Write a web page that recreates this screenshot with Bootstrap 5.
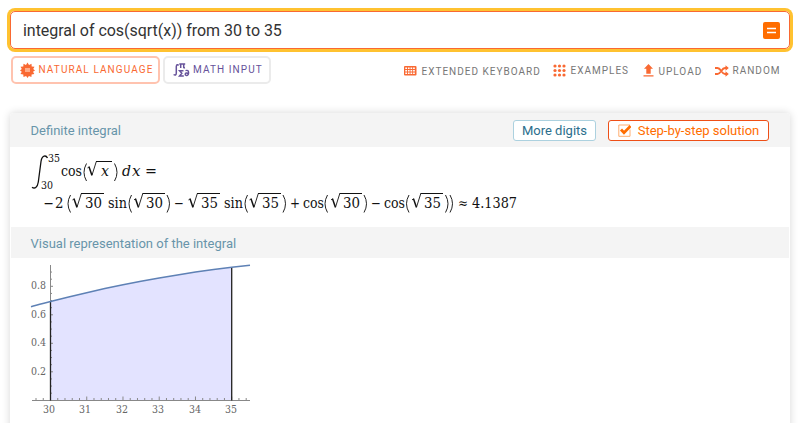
<!DOCTYPE html>
<html lang="en">
<head>
<meta charset="utf-8">
<meta name="viewport" content="width=device-width, initial-scale=1">
<title>integral of cos(sqrt(x)) from 30 to 35</title>
<link href="https://cdn.jsdelivr.net/npm/bootstrap@5.3.0/dist/css/bootstrap.min.css" rel="stylesheet">
<style>
body{font-family:Roboto,sans-serif;background:#fff;overflow:hidden;height:423px}
.page-wrap{padding:11px 11px 0 10px}
.query-box{height:38px;border:1px solid #f96932;border-radius:5px;box-shadow:0 0 0 3px #ffc230;padding:0 9px 0 12px}
.query-box input{font-size:16px;color:#333;letter-spacing:-.03px;line-height:24px;padding-top:2px!important;outline:0}
.go-btn{width:17px;height:17px;background:#ff6d00;border-radius:2px}
.tool-row{margin-top:7px;height:28px;padding:0 10px 0 1px}
.mode-btn{height:28px;border:2px solid #ebebeb;border-radius:5px;font-size:10px;letter-spacing:1.1px;color:#66529a;background:#fff;line-height:24px;padding:0}
.mode-btn.nl{width:149px;border-color:#ffc3af;color:#f96932;padding-left:6.5px}
.mode-btn.mi{width:108px;margin-left:3px;padding-left:8px}
.tool-link{font-size:10px;letter-spacing:1px;color:#777;text-decoration:none;line-height:14px;margin-left:-.5px;margin-right:.5px}
.low-label{padding-top:3px}
.high-label{padding-top:2px}
.result-card{margin-top:29px;height:330px;border:0;border-radius:4px 4px 0 0;box-shadow:0 0 9px rgba(0,0,0,.16);padding:0 1px}
.pod-head{background:#f4f4f4;color:#6895aa;font-size:13px;padding:0 20px 0 19.5px}
.pod-head h2{font-size:13px;font-weight:400;line-height:20px;padding-top:2px}
.first-head{height:34px;margin:0 -1px;padding:0 21px 0 20.5px;border-radius:4px 4px 0 0}
.second-head{height:31px}
.second-head h2{padding-top:3px}
.pod-btn{height:21px;border-radius:3px;font-size:13px;line-height:19px;padding:0;background:#fff}
.digits-btn{width:83px;border:1px solid #acd1df;color:#2b6e8c}
.step-btn{width:161px;border:1px solid #ee4f17;color:#ff6d00;margin-left:12px}
.formula{font-family:"DejaVu Serif",serif;font-size:14px;fill:#111}
.plot{font-family:"DejaVu Serif",serif;font-size:11px;fill:#666}
svg{display:block;flex:none}
</style>
<script src="https://cdn.jsdelivr.net/npm/bootstrap@5.3.0/dist/js/bootstrap.bundle.min.js"></script>
</head>
<body>
<main class="page-wrap">
<form class="query-box d-flex align-items-center">
<input class="flex-grow-1 border-0 p-0 bg-transparent" type="text" aria-label="Query" value="integral of cos(sqrt(x)) from 30 to 35">
<button type="button" class="go-btn border-0 p-0" aria-label="Compute"><svg width="17" height="17"><path d="M4 6.500h9M4 10.500h9" stroke="#fff" stroke-width="1.300"/></svg></button>
</form>
<div class="tool-row d-flex">
<button class="mode-btn nl d-flex align-items-center"><svg class="me-1" width="15" height="16" viewBox="0 0 15 16"><path d="M7.500 .5 9 3l2.500-1.300.2 2.700 2.800.3-1.300 2.400 1.800 1.400-2 1.300 1.300 2.300-2.700.3-.2 2.700-2.500-1.200-1.400 2-1.400-2-2.600 1.200-.2-2.700-2.800-.3L1.800 9.800 0 8.500l1.800-1.400L.5 4.700l2.800-.3.2-2.700L6 3z" fill="#f96932"/><path d="M5 6h5v4H5z" fill="#ffab88"/></svg><span>NATURAL LANGUAGE</span></button>
<button class="mode-btn mi d-flex align-items-center"><svg style="margin-right:1px" width="19" height="20" viewBox="0 0 19 20" fill="none" stroke="#66529a" stroke-width="1.500"><path d="M5.600 5.500C4.800 4.200 3.500 4.500 3.300 6.500v6.500c-.1 2.200-1.200 2.600-2.700 1.500M6.300 3.900h5.900M7.700 4v4M10.700 4v3.300q0 .7 1.300.4M10.500 10.800H6.600l2.200 2.500-2.200 2.600h4.200"/><path d="M12.500 10.600c2.100-.7 3.100.2 3.100 1.800 0 4-3.400 3.700-3.400 1.800 0-1.500 2.200-1.500 3.200-.5" stroke-width="1.400"/></svg><span>MATH INPUT</span></button>
<div class="d-flex align-items-center ms-auto">
<a class="tool-link d-flex align-items-center" href="#" style="width:149px"><svg style="margin-right:5px;margin-top:1px" width="13" height="10" viewBox="0 0 13 10"><rect width="12.500" height="9.500" rx="1" fill="#f96932"/><path d="M1.300 2.300h10M1.300 4.800h10M1.300 7.300h10" stroke="#fff" stroke-width="1.500" stroke-dasharray="1.700 .9"/></svg><span class="low-label">EXTENDED&nbsp;KEYBOARD</span></a>
<a class="tool-link d-flex align-items-center" href="#" style="width:90px"><svg style="margin-right:5px;margin-top:1px" width="13" height="13" viewBox="0 0 13 13" fill="#f96932"><circle cx="2" cy="2" r="1.600"/><circle cx="6.500" cy="2" r="1.600"/><circle cx="11" cy="2" r="1.600"/><circle cx="2" cy="6.500" r="1.600"/><circle cx="6.500" cy="6.500" r="1.600"/><circle cx="11" cy="6.500" r="1.600"/><circle cx="2" cy="11" r="1.600"/><circle cx="6.500" cy="11" r="1.600"/><circle cx="11" cy="11" r="1.600"/></svg><span class="high-label">EXAMPLES</span></a>
<a class="tool-link d-flex align-items-center" href="#" style="width:72px"><svg style="margin-right:5px;margin-top:1px" width="11" height="13" viewBox="0 0 11 13" fill="#f96932"><path d="M5.500 0 10 4.800H7.700v5H3.300v-5H1zM.5 11.200h10v1.300H.5z"/></svg><span class="low-label">UPLOAD</span></a>
<a class="tool-link d-flex align-items-center" href="#" style="width:65px"><svg style="margin-right:4px;margin-top:2px" width="14" height="12" viewBox="0 0 14 12"><path d="M0 3h2.500C6 3 6.500 9 10 9h1.500M0 9h2.500C6 9 6.500 3 10 3h1.500" fill="none" stroke="#f96932" stroke-width="1.800"/><path d="m10.500.2 3.300 2.800-3.300 2.800zm0 6 3.300 2.800-3.300 2.800z" fill="#f96932"/></svg><span class="high-label">RANDOM</span></a>
</div>
</div>
<section class="card result-card">
<header class="pod-head first-head d-flex align-items-center"><h2 class="m-0">Definite integral</h2>
<button class="pod-btn digits-btn ms-auto">More digits</button>
<button class="pod-btn step-btn d-flex align-items-center justify-content-center"><svg style="margin-right:7px" width="13" height="13" viewBox="0 0 13 13"><path d="M12 5.500v6.800H.8V1H12" fill="none" stroke="#ffad70"/><path d="m3 5.500 3 3.200L12.600 2" fill="none" stroke="#ff6d00" stroke-width="2.800"/></svg><span>Step-by-step solution</span></button></header>
<svg class="formula" width="778" height="80" viewBox="11 147 778 80">
<defs><g id="root" fill="none" stroke="#111"><path d="M.5 7.400 2.300 6.200M4.900 15 9.300 1" stroke-width=".9"/><path d="M2 6.200 4.900 14.800" stroke-width="1.500"/></g></defs>
<path d="M47.500 158C46 155 42 155 41 161.500L38.300 182C37.500 187.700 34.500 189 32 187.200" fill="none" stroke="#111" stroke-width="1.300"/>
<g font-size="11"><text x="48" y="162" textLength="12" lengthAdjust="spacingAndGlyphs">35</text><text x="41" y="189" textLength="12" lengthAdjust="spacingAndGlyphs">30</text></g>
<text x="61" y="176" textLength="21" lengthAdjust="spacingAndGlyphs">cos</text>
<g fill="none" stroke="#222"><path d="M86.500 163.500q-5 9 0 17.500M114.500 163.500q5 9 0 17.500"/></g>
<use href="#root" x="87" y="160.500"/><path d="M96 161.500H112" stroke="#111"/>
<g font-style="italic"><text x="101" y="176" textLength="8" lengthAdjust="spacingAndGlyphs">x</text><text x="122" y="176" textLength="9" lengthAdjust="spacingAndGlyphs">d</text><text x="132" y="176" textLength="8.500" lengthAdjust="spacingAndGlyphs">x</text></g><text x="145" y="176" textLength="12" lengthAdjust="spacingAndGlyphs">=</text>
<text x="43.500" y="208" textLength="10.500" lengthAdjust="spacingAndGlyphs">−</text><text x="55" y="208" textLength="8.500" lengthAdjust="spacingAndGlyphs">2</text>
<g fill="none" stroke="#222"><path d="M70.500 195q-5 8.800 0 17.500M131.500 195q-5 8.800 0 17.500M167 195q5 8.800 0 17.500M247.500 195q-5 8.800 0 17.500M283 195q5 8.800 0 17.500M327.500 195q-5 8.800 0 17.500M364 195q5 8.800 0 17.500M409 195q-5 8.800 0 17.500M445.500 195q5 8.800 0 17.500M450 195q5 8.800 0 17.500"/></g>
<use href="#root" x="72" y="192.500"/><use href="#root" x="133.500" y="192.500"/><use href="#root" x="188" y="192.500"/><use href="#root" x="249" y="192.500"/><use href="#root" x="330.500" y="192.500"/><use href="#root" x="411.500" y="192.500"/>
<path d="M81 193.500H104M142.500 193.500H165M197 193.500H220M258 193.500H281M339.500 193.500H362M420.500 193.500H443" stroke="#111"/>
<text x="85" y="208" textLength="17" lengthAdjust="spacingAndGlyphs">30</text><text x="108" y="208" textLength="19" lengthAdjust="spacingAndGlyphs">sin</text><text x="146" y="208" textLength="17" lengthAdjust="spacingAndGlyphs">30</text><text x="174" y="208" textLength="10" lengthAdjust="spacingAndGlyphs">−</text><text x="201" y="208" textLength="17" lengthAdjust="spacingAndGlyphs">35</text><text x="224" y="208" textLength="19" lengthAdjust="spacingAndGlyphs">sin</text><text x="262" y="208" textLength="17" lengthAdjust="spacingAndGlyphs">35</text><text x="290" y="208" textLength="10" lengthAdjust="spacingAndGlyphs">+</text><text x="303" y="208" textLength="21" lengthAdjust="spacingAndGlyphs">cos</text><text x="343" y="208" textLength="17" lengthAdjust="spacingAndGlyphs">30</text><text x="371" y="208" textLength="10" lengthAdjust="spacingAndGlyphs">−</text><text x="384" y="208" textLength="21" lengthAdjust="spacingAndGlyphs">cos</text><text x="424" y="208" textLength="17" lengthAdjust="spacingAndGlyphs">35</text><text x="458" y="208" textLength="10" lengthAdjust="spacingAndGlyphs">≈</text><text x="472" y="208" textLength="45" lengthAdjust="spacingAndGlyphs">4.1387</text>
</svg>
<header class="pod-head second-head d-flex align-items-center"><h2 class="m-0">Visual representation of the integral</h2></header>
<svg class="plot" width="778" height="165" viewBox="11 258 778 165">
<path d="M50.500 301.600 68.600 297 86.700 292.700 123 284.800 159.200 278 195.500 272.100 231.700 267.300V400.500H50.500z" fill="#e3e3ff"/>
<path d="M32 400.500H250M50.500 265V400" stroke="#888" fill="none"/>
<path id="ticks" stroke="#888" fill="none"/>
<path d="M50.500 301.500V400.500M231.700 267V400.500" stroke="#222" stroke-width="1.300"/>
<path d="M31 306.700C37 305 44 303.300 50.500 301.600L68.600 297 86.700 292.700 104.800 288.600 123 284.800 141 281.300 159.200 278 177.400 274.900 195.500 272.100 213.600 269.600 231.700 267.300 250 265.300" fill="none" stroke="#5e81b5" stroke-width="1.500"/>
<text x="31" y="289" textLength="15" lengthAdjust="spacingAndGlyphs">0.8</text><text x="31" y="318" textLength="15" lengthAdjust="spacingAndGlyphs">0.6</text><text x="31" y="346" textLength="15" lengthAdjust="spacingAndGlyphs">0.4</text><text x="31" y="375" textLength="15" lengthAdjust="spacingAndGlyphs">0.2</text>
<g text-anchor="middle"><text x="49" y="413" textLength="12" lengthAdjust="spacingAndGlyphs">30</text><text x="85" y="413" textLength="12" lengthAdjust="spacingAndGlyphs">31</text><text x="122" y="413" textLength="12" lengthAdjust="spacingAndGlyphs">32</text><text x="158" y="413" textLength="12" lengthAdjust="spacingAndGlyphs">33</text><text x="195" y="413" textLength="12" lengthAdjust="spacingAndGlyphs">34</text><text x="231" y="413" textLength="12" lengthAdjust="spacingAndGlyphs">35</text></g>
</svg>
</section>
</main>
<script>
// Axis ticks: five subdivisions per x unit and four per 0.2 on the y axis
let d = '';
for (let i = -2; i <= 27; i++) d += `M${50.5 + i * 7.248} 400v${i % 5 ? -2 : -3.5}`;
for (let i = 1; i <= 18; i++) d += `M51 ${400.3 - i * 7.125}h${i % 4 ? 1 : 2}`;
document.getElementById('ticks').setAttribute('d', d);
</script>
</body>
</html>
